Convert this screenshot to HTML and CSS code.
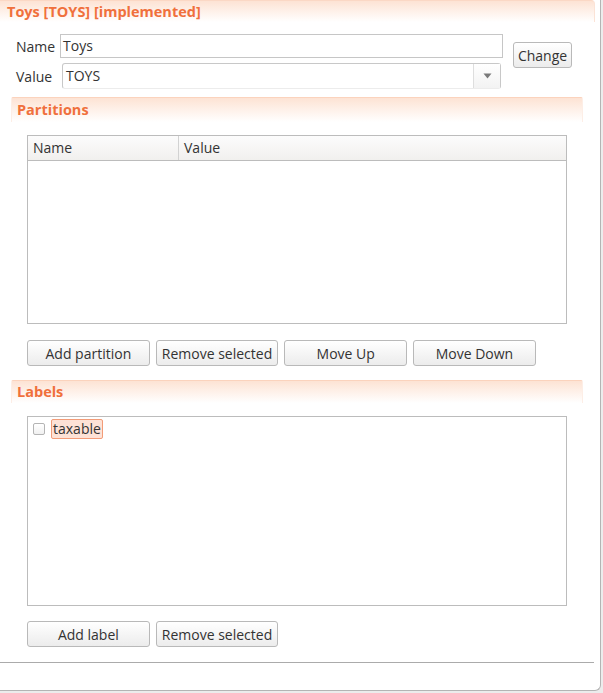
FILE: index.html
```html
<!DOCTYPE html>
<html>
<head>
<meta charset="utf-8">
<link rel="stylesheet" href="styles.css">
</head>
<body>
<div class="window">
  <div class="title">Toys [TOYS] [implemented]</div>
  <div class="form">
    <div class="fields">
      <div class="row row-name">
        <span class="lbl">Name</span>
        <div class="input">Toys</div>
      </div>
      <div class="row row-value">
        <span class="lbl">Value</span>
        <div class="combo"><span class="combo-text">TOYS</span><span class="combo-arrow"><svg width="9" height="6" viewBox="0 0 9 6"><path d="M0.5 0.5 L8.5 0.5 L4.5 5.5 Z" fill="#7a7a7a"/></svg></span></div>
      </div>
    </div>
    <button class="btn btn-change">Change</button>
  </div>

  <div class="section">Partitions</div>
  <div class="table">
    <div class="thead">
      <div class="th th-name">Name</div>
      <div class="th th-value">Value</div>
    </div>
  </div>
  <div class="buttons">
    <button class="btn btn-wide">Add partition</button>
    <button class="btn btn-wide">Remove selected</button>
    <button class="btn btn-wide">Move Up</button>
    <button class="btn btn-wide">Move Down</button>
  </div>

  <div class="section section-labels">Labels</div>
  <div class="list">
    <div class="item"><span class="check"></span><span class="chip">taxable</span></div>
  </div>
  <div class="buttons buttons-labels">
    <button class="btn btn-wide">Add label</button>
    <button class="btn btn-wide">Remove selected</button>
  </div>
  <div class="sep"></div>
</div>
</body>
</html>
```

FILE: styles.css
```css
html, body {
  margin: 0;
  padding: 0;
  background: #ececec;
}
body {
  font-family: "Open Sans", "Noto Sans", sans-serif;
  font-size: 14px;
  color: #333333;
}
.window {
  width: 600px;
  height: 690px;
  background: #ffffff;
  border-right: 1px solid #b4b4b4;
  border-bottom: 1px solid #b4b4b4;
  border-bottom-right-radius: 6px;
  overflow: hidden;
  box-sizing: content-box;
}
.title {
  width: 587px;
  height: 21px;
  padding-left: 7px;
  border-top: 1px solid #fbd8c5;
  border-right: 1px solid #fbe3d6;
  border-top-right-radius: 4px;
  background: linear-gradient(#fde3d4, #ffffff);
  color: #f0703c;
  font-weight: bold;
  font-size: 14.5px;
  line-height: 21px;
  box-sizing: content-box;
}
.form {
  display: flex;
  align-items: flex-start;
  padding-top: 12px;
  padding-left: 16px;
}
.fields {
  display: flex;
  flex-direction: column;
  gap: 5px;
}
.row {
  display: flex;
  align-items: center;
}
.lbl {
  width: 44px;
}
.input {
  width: 443px;
  height: 24px;
  border: 1px solid #c6c6c6;
  box-sizing: border-box;
  padding-left: 2px;
  line-height: 22px;
}
.row-value .lbl { width: 46px; }
.combo {
  width: 439px;
  height: 26px;
  border: 1px solid #c8c8c8;
  border-bottom-color: #ececec;
  border-radius: 3px;
  box-sizing: border-box;
  display: flex;
}
.combo-text {
  flex: 1;
  padding-left: 3px;
  line-height: 24px;
}
.combo-arrow {
  width: 26px;
  border-left: 1px solid #dedede;
  display: flex;
  align-items: center;
  justify-content: center;
  background: linear-gradient(#ffffff, #f3f3f3);
}
.btn {
  font-family: "Open Sans", "Noto Sans", sans-serif;
  font-size: 14px;
  color: #333333;
  border: 1px solid #b9b9b9;
  border-radius: 3px;
  background: linear-gradient(#ffffff, #ececec);
  padding: 0;
  margin: 0;
  height: 26px;
  box-sizing: border-box;
}
.btn-change {
  width: 59px;
  margin-left: 10px;
  margin-top: 8px;
}
.section {
  margin-left: 11px;
  width: 572px;
  height: 25px;
  box-sizing: border-box;
  border-top: 1px solid #fbd3bd;
  border-left: 1px solid #fdeee6;
  border-right: 1px solid #fdeee6;
  border-top-left-radius: 2px;
  border-top-right-radius: 2px;
  background: linear-gradient(#fde3d4, #ffffff);
  color: #f0703c;
  font-weight: bold;
  font-size: 14.5px;
  padding-left: 5px;
  line-height: 24px;
  margin-top: 8px;
}
.table {
  margin-left: 27px;
  margin-top: 13px;
  width: 540px;
  height: 189px;
  border: 1px solid #bcbcbc;
  box-sizing: border-box;
}
.thead {
  display: flex;
  height: 25px;
  border-bottom: 1px solid #bcbcbc;
  background: linear-gradient(#fcfcfc, #f1f0ee);
  box-sizing: border-box;
}
.th {
  line-height: 24px;
  padding-left: 5px;
}
.th-name {
  width: 145px;
  border-right: 1px solid #d2d2d2;
}
.buttons {
  display: flex;
  gap: 6px;
  margin-left: 27px;
  margin-top: 16px;
}
.btn-wide {
  width: 122.7px;
}
.section-labels {
  margin-top: 14px;
  height: 23px;
  line-height: 22px;
}
.list {
  margin-left: 27px;
  margin-top: 13px;
  width: 540px;
  height: 190px;
  border: 1px solid #bcbcbc;
  box-sizing: border-box;
  padding: 2px 0 0 5px;
}
.item {
  display: flex;
  align-items: center;
  gap: 6px;
}
.check {
  width: 10px;
  height: 10px;
  border: 1px solid #b4b4b4;
  border-radius: 2px;
  background: linear-gradient(#ffffff, #f0f0f0);
}
.chip {
  background: #fde2d6;
  border: 1px solid #f29c78;
  border-radius: 2px;
  padding: 0 1px;
  line-height: 18px;
}
.buttons-labels {
  margin-top: 15px;
}
.sep {
  margin-top: 15px;
  width: 594px;
  height: 0;
  border-top: 1px solid #ababab;
}
```
